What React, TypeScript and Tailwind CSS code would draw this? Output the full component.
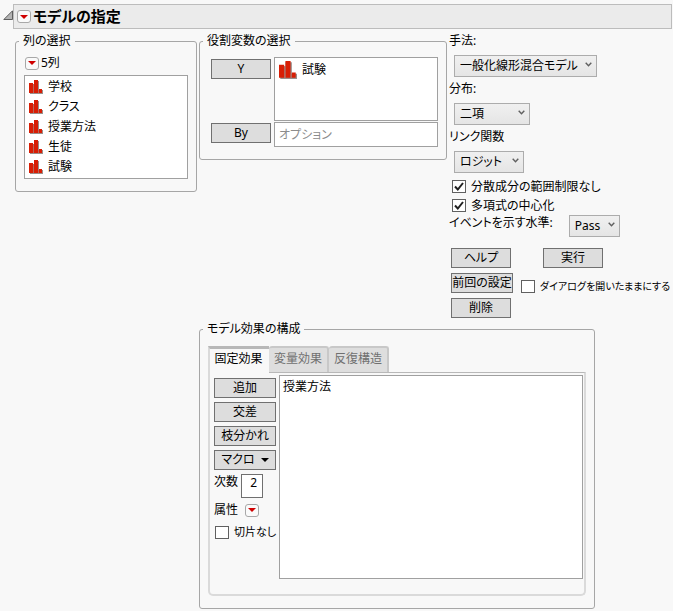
import React, { useState } from 'react';

const columns = ['学校', 'クラス', '授業方法', '生徒', '試験'];
const tabs = ['固定効果', '変量効果', '反復構造'];

const NominalIcon = ({ className }: { className: string }) => (
  <svg viewBox="0 0 14 14" className={className} aria-hidden="true">
    <path d="M1 4h4V1h5v9h4v4H1z" fill="#9a8f8c" />
    <path d="M0 3h4v10H0zM5 0h4v13H5zM10 9h3v4h-3z" fill="#d81e05" />
    <path d="M4.5 4v9M9.5 10v3" stroke="#b5685c" strokeWidth="1" />
  </svg>
);

const RedMenu = ({ label }: { label: string }) => (
  <button
    type="button"
    aria-label={label}
    className="flex h-[13px] w-3.5 shrink-0 items-center justify-center rounded-[3px] border border-[#a8a8a8] bg-[#fafafa]"
  >
    <svg viewBox="0 0 8 4" className="h-1 w-2">
      <path d="M0 0h8L4 4z" fill="#d00000" />
    </svg>
  </button>
);

const PushButton = ({ className, children }: { className: string; children: React.ReactNode }) => (
  <button
    type="button"
    className={`flex h-5 items-center justify-center border border-[#707070] bg-[#dddddd] whitespace-nowrap hover:bg-[#e8e8e8] ${className}`}
  >
    {children}
  </button>
);

const Dropdown = ({ id, className, options }: { id: string; className: string; options: string[] }) => (
  <div className={`relative ${className}`}>
    <select
      id={id}
      className="block h-[22px] w-full appearance-none border border-[#acacac] bg-linear-to-b from-[#f0f0f0] to-[#e5e5e5] pl-[5px] leading-5"
    >
      {options.map((o) => (
        <option key={o}>{o}</option>
      ))}
    </select>
    <svg viewBox="0 0 7 5" className="pointer-events-none absolute top-[7px] right-[5px] h-[5px] w-[7px]">
      <path d="M0.7 0.7L3.5 3.7L6.3 0.7" fill="none" stroke="#606060" strokeWidth="1.4" />
    </svg>
  </div>
);

const CheckBox = ({ label, className, checked }: { label: string; className: string; checked?: boolean }) => (
  <label className={`flex items-center gap-[5px] whitespace-nowrap ${className}`}>
    <span className="relative flex shrink-0">
      <input
        type="checkbox"
        defaultChecked={checked}
        className="peer h-[13px] w-[14px] appearance-none border border-[#606060] bg-white"
      />
      <svg
        viewBox="0 0 14 13"
        className="pointer-events-none absolute inset-0 hidden h-[13px] w-[14px] peer-checked:block"
      >
        <path d="M3 6.5L5.8 9.5L11 3" fill="none" stroke="#202020" strokeWidth="2" />
      </svg>
    </span>
    <span>{label}</span>
  </label>
);

const Group = ({ title, className, children }: { title: string; className: string; children: React.ReactNode }) => (
  <fieldset className={`rounded-[3px] border border-[#a6a6a6] ${className}`}>
    <legend className="ml-[3px] px-1 leading-4">{title}</legend>
    {children}
  </fieldset>
);

const App: React.FC = () => {
  const [activeTab, setActiveTab] = useState(tabs[0]);

  return (
    <div className="min-h-screen bg-[#f8f8f8] pt-1 font-['Noto_Sans','Noto_Sans_CJK_JP',sans-serif] text-xs leading-4 text-black [font-feature-settings:'palt']">
      {/* Outline header */}
      <header className="flex items-center pr-px pl-[3px]">
        <svg viewBox="0 0 10 10" className="mb-1 h-2.5 w-2.5">
          <path d="M9.5 0.8V9.5H0.8z" fill="#b4b4b4" stroke="#505050" strokeWidth="0.9" />
        </svg>
        <div className="flex h-[25px] flex-1 items-center gap-0.5 border border-[#bcbcbc] bg-[#ebebeb] pl-[3px]">
          <RedMenu label="モデルの指定のメニュー" />
          <h1 className="pb-0.5 text-[15px] leading-5 font-bold">モデルの指定</h1>
        </div>
      </header>

      <main className="mt-1 flex items-start gap-0.5 pl-[15px]">
        <Group title="列の選択" className="w-[182px] shrink-0">
          <div className="px-2 pt-1 pb-3">
            <div className="mb-0.5 flex h-5 items-center gap-0.5 pl-px">
              <RedMenu label="列のメニュー" />
              <span>5列</span>
            </div>
            <ul className="border border-[#a0a0a0] bg-white pt-px pb-px">
              {columns.map((name) => (
                <li key={name} className="flex h-5 items-center gap-[5px] pl-1">
                  <NominalIcon className="h-3.5 w-3.5" />
                  {name}
                </li>
              ))}
            </ul>
          </div>
        </Group>

        <div className="flex-1">
          <div className="flex items-start gap-0.5">
            <Group title="役割変数の選択" className="w-[248px] shrink-0">
              <div className="grid grid-cols-[60px_1fr] gap-x-[3px] gap-y-px pt-2 pr-2 pb-3 pl-[11px]">
                <PushButton className="mt-0.5">Y</PushButton>
                <ul className="h-16 border border-[#a0a0a0] bg-white">
                  <li className="flex h-6 items-center gap-[5px] pl-1">
                    <NominalIcon className="h-[18px] w-[18px]" />
                    試験
                  </li>
                </ul>
                <PushButton className="mt-px">By</PushButton>
                <input
                  type="text"
                  aria-label="By"
                  placeholder="オプション"
                  className="h-[25px] w-full border border-[#a0a0a0] bg-white px-1 placeholder:text-[#8c8c8c]"
                />
              </div>
            </Group>

            {/* Model options */}
            <div>
              <label htmlFor="method" className="block">手法:</label>
              <Dropdown
                id="method"
                className="mt-1.5 mb-1 ml-[5px] w-[143px]"
                options={['一般化線形混合モデル', '標準最小2乗', '一般化線形モデル']}
              />
              <label htmlFor="distribution" className="block">分布:</label>
              <Dropdown
                id="distribution"
                className="mt-1.5 mb-1 ml-[5px] w-[76px]"
                options={['二項', 'Poisson', '正規']}
              />
              <label htmlFor="link" className="block">リンク関数</label>
              <Dropdown id="link" className="mt-1.5 mb-1 ml-[5px] w-[70px]" options={['ロジット', 'プロビット']} />
              <CheckBox label="分散成分の範囲制限なし" className="h-[19px] pl-[3px]" checked />
              <CheckBox label="多項式の中心化" className="h-[19px] pl-[3px]" checked />
              <div className="flex items-start gap-4">
                <label htmlFor="event" className="whitespace-nowrap">イベントを示す水準:</label>
                <Dropdown id="event" className="w-[51px]" options={['Pass', 'Fail']} />
              </div>

              <div className="mt-[11px] flex flex-col gap-[5px] pl-0.5">
                <div className="flex gap-8">
                  <PushButton className="w-[60px]">ヘルプ</PushButton>
                  <PushButton className="w-[60px]">実行</PushButton>
                </div>
                <div className="flex h-5 gap-2">
                  <PushButton className="w-[62px]">前回の設定</PushButton>
                  <CheckBox label="ダイアログを開いたままにする" className="pt-1.5 text-[10px]" />
                </div>
                <PushButton className="w-[60px]">削除</PushButton>
              </div>
            </div>
          </div>

          <Group title="モデル効果の構成" className="mt-[3px] w-[396px]">
            <div className="px-2 pt-[9px] pb-3">
              <div role="tablist" className="flex">
                {tabs.map((tab) => (
                  <button
                    key={tab}
                    type="button"
                    role="tab"
                    aria-selected={tab === activeTab}
                    onClick={() => setActiveTab(tab)}
                    className={
                      tab === activeTab
                        ? 'relative z-10 -mb-px h-[27px] w-[61px] border-t-3 border-l-2 border-t-[#b8b8b8] border-l-[#dadada] bg-[#f8f8f8] pr-0.5 pb-1'
                        : 'h-[26px] w-[60px] rounded-t-[3px] border-t-2 border-r-2 border-[#c8c8c8] bg-[#dedede] pb-0.5 text-[#707070]'
                    }
                  >
                    {tab}
                  </button>
                ))}
              </div>
              <div
                role="tabpanel"
                className="flex gap-[3px] rounded-b-[5px] border-2 border-t border-[#dadada] border-t-[#b8b8b8] pt-0.5 pr-px pb-[15px] pl-1"
              >
                <div className="flex w-[62px] shrink-0 flex-col gap-1 pt-[3px]">
                  <PushButton className="w-full">追加</PushButton>
                  <PushButton className="w-full">交差</PushButton>
                  <PushButton className="w-full">枝分かれ</PushButton>
                  <PushButton className="w-full gap-1.5">
                    マクロ
                    <svg viewBox="0 0 8 4" className="h-1 w-2">
                      <path d="M0 0h8L4 4z" fill="#000" />
                    </svg>
                  </PushButton>
                  <div className="flex gap-[3px]">
                    <label htmlFor="degree">次数</label>
                    <input
                      id="degree"
                      type="text"
                      defaultValue="2"
                      className="h-6 w-[22px] border border-[#707070] bg-white pr-[5px] pb-2 text-right"
                    />
                  </div>
                  <div className="flex items-center gap-[7px]">
                    <span>属性</span>
                    <RedMenu label="属性のメニュー" />
                  </div>
                  <CheckBox label="切片なし" className="mt-0.5 pl-px text-[11px]" />
                </div>
                <ul className="h-[204px] flex-1 border border-[#a0a0a0] bg-white px-[3px] pt-[3px]">
                  <li>授業方法</li>
                </ul>
              </div>
            </div>
          </Group>
        </div>
      </main>
    </div>
  );
};

export default App;
